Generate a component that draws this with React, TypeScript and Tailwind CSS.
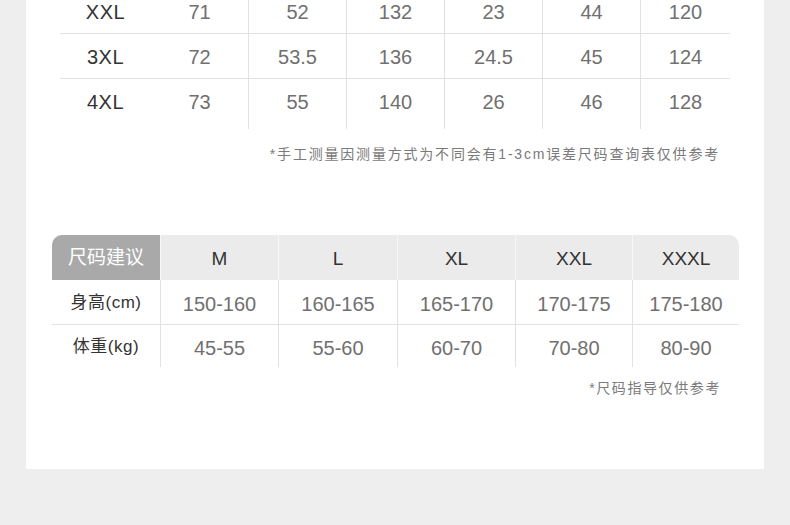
const font = { fontFamily: '"Liberation Sans", Arial, "Noto Sans CJK SC", sans-serif' };

const measureRows = [
  { size: "XXL", values: ["71", "52", "132", "23", "44", "120"] },
  { size: "3XL", values: ["72", "53.5", "136", "24.5", "45", "124"] },
  { size: "4XL", values: ["73", "55", "140", "26", "46", "128"] },
];

// widths of the measurement columns (first col is the size label)
const measureCols = ["w-[98px]", "w-[98px]", "w-[98px]", "w-[98px]", "w-[98px]", "w-[89px]"];

const guideCols = ["w-[118px]", "w-[119px]", "w-[118px]", "w-[117px]", "w-[107px]"];
const guideSizes = ["M", "L", "XL", "XXL", "XXXL"];
const guideRows = [
  { label: "身高(cm)", values: ["150-160", "160-165", "165-170", "170-175", "175-180"] },
  { label: "体重(kg)", values: ["45-55", "55-60", "60-70", "70-80", "80-90"] },
];

function MeasureTable() {
  return (
    <div className="ml-[34px] w-[670px]">
      {measureRows.map((row, i) => {
        const last = i === measureRows.length - 1;
        return (
          <div
            key={row.size}
            className={
              last
                ? "flex h-[50px]"
                : "flex h-[45px] border-b border-[#e2e2e2]"
            }
          >
            <div className="w-[91px] h-[45px] flex items-center justify-center text-[20px] tracking-[0.5px] text-[#333]">
              {row.size}
            </div>
            {row.values.map((v, j) => (
              <div
                key={j}
                className={`${measureCols[j]} ${j < 5 ? "border-r" : ""} border-l-0 border-[#e2e2e2] first:border-l flex items-start`}
              >
                <div className="w-full h-[45px] flex items-center justify-center text-[20px] text-[#707070]">
                  {v}
                </div>
              </div>
            ))}
          </div>
        );
      })}
    </div>
  );
}

function GuideTable() {
  return (
    <div className="ml-[26px] w-[687px]">
      <div className="flex h-[45px] bg-[#ebebeb] rounded-t-[10px]">
        <div className="w-[108px] flex items-center justify-center bg-[#a9a9a9] rounded-tl-[10px] pt-[2px] text-[19px] text-white">
          尺码建议
        </div>
        {guideSizes.map((s, j) => (
          <div
            key={s}
            className={`${guideCols[j]} border-l border-[#f6f6f6] flex items-center justify-center pt-[3px] text-[19px] text-[#333]`}
          >
            {s}
          </div>
        ))}
      </div>
      {guideRows.map((row, i) => (
        <div
          key={row.label}
          className={i === 0 ? "flex h-[45px] border-b border-[#e2e2e2]" : "flex h-[42px]"}
        >
          <div className="w-[108px] flex items-center justify-center pt-[2px] text-[17px] text-[#333] tracking-[0.5px]">
            {row.label}
          </div>
          {row.values.map((v, j) => (
            <div
              key={j}
              className={`${guideCols[j]} border-l border-[#e2e2e2] flex items-center justify-center pt-[4px] text-[20px] text-[#707070]`}
            >
              {v}
            </div>
          ))}
        </div>
      ))}
    </div>
  );
}

export default function App() {
  return (
    <div className="w-[790px] h-[525px] overflow-hidden bg-[#eeeeee]" style={font}>
      <div className="mx-[26px] mt-[-11px] h-[480px] bg-white">
        <MeasureTable />
        <div className="mt-[15px] pr-[44px] text-right text-[14px] leading-[20px] tracking-[1.8px] text-[#7a7a7a]">
          *手工测量因测量方式为不同会有1-3cm误差尺码查询表仅供参考
        </div>
        <div className="mt-[71px]">
          <GuideTable />
        </div>
        <div className="mt-[11px] pr-[43px] text-right text-[14px] leading-[20px] tracking-[1.6px] text-[#7a7a7a]">
          *尺码指导仅供参考
        </div>
      </div>
    </div>
  );
}
